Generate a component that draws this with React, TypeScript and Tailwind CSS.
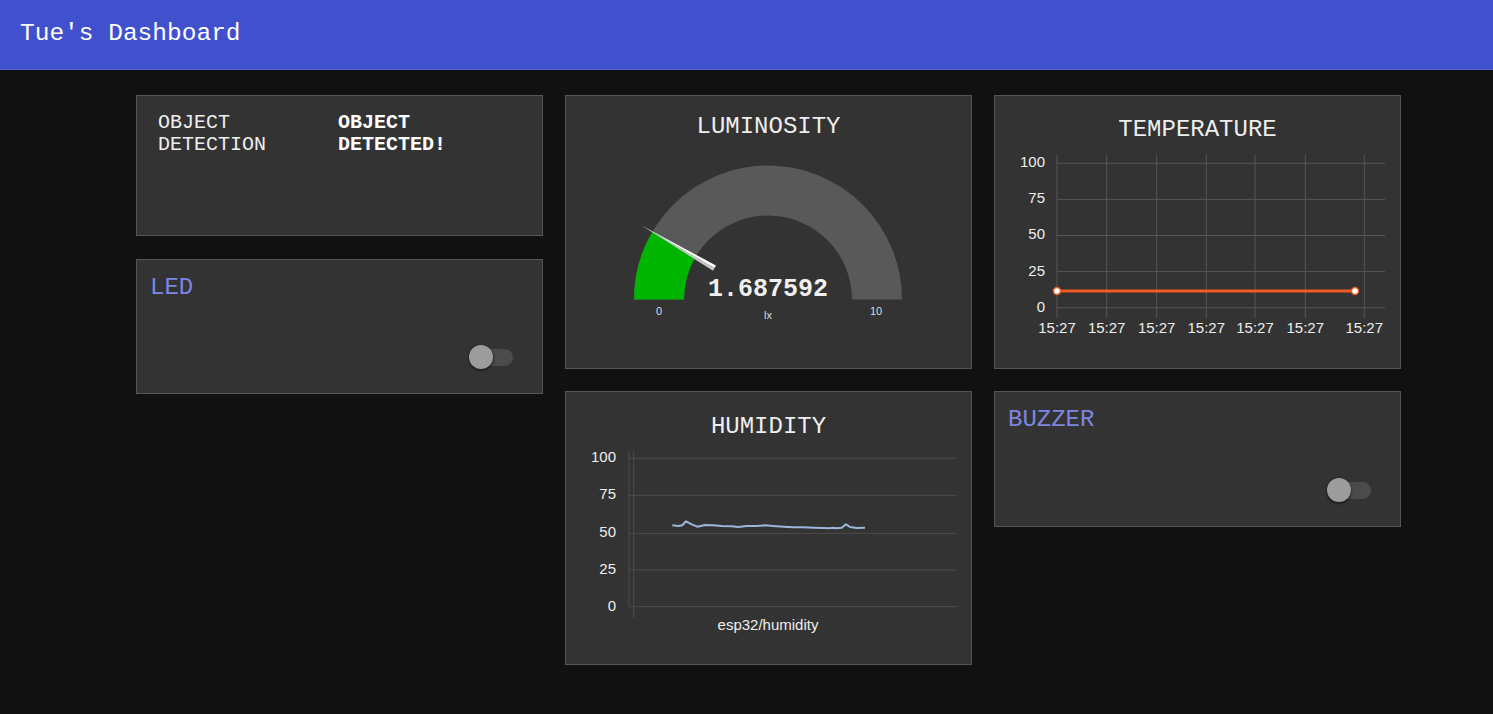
import React from 'react'

const mono = { fontFamily: '"Liberation Mono", "DejaVu Sans Mono", monospace' }
const sans = { fontFamily: '"Liberation Sans", Arial, sans-serif' }

const tempGridY = [20.3, 56.4, 92.5, 128.6, 164.7]
const tempGridX = [62, 111.7, 161.7, 211.3, 260, 310.3, 369.3]
const humGridY = [18.3, 55.3, 93.3, 130, 166.7]
const yLabels = ['100', '75', '50', '25', '0']

const humidity: [number, number][] = [
  [106.3, 85.3], [112.3, 86], [116.3, 85.3], [120, 81.3], [125.7, 84.3], [131.3, 86.7],
  [139, 85], [147.3, 85.3], [155.7, 86], [165.7, 86.3], [172.3, 87], [180.7, 86],
  [190.7, 86], [199, 85.3], [207.3, 86], [217.3, 86.7], [227.3, 87.3], [237.3, 87.3],
  [247.3, 87.7], [257.3, 88], [264, 88.3], [267.3, 87.7], [270.7, 88.3], [275.7, 87.7],
  [280, 84.3], [284, 87], [290.7, 88], [299, 87.7],
]

function Card({ className, children }: { className: string; children?: React.ReactNode }) {
  return <div className={`bg-[#333333] border border-[#555555] ${className}`}>{children}</div>
}

function Toggle() {
  return (
    <div className="relative w-[44px] h-[24px]">
      <div className="absolute right-0 top-[3.5px] w-[38px] h-[17px] rounded-full bg-[#4b4b4b]" />
      <div className="absolute left-0 top-0 w-6 h-6 rounded-full bg-[#9c9c9c] shadow-[0_1px_3px_rgba(0,0,0,0.7)]" />
    </div>
  )
}

function SwitchCard({ label, className }: { label: string; className: string }) {
  return (
    <Card className={`flex flex-col ${className}`}>
      <div className="pl-[13px] pt-[14px] text-[24px] leading-[28px] text-[#7d86e2]" style={mono}>
        {label}
      </div>
      <div className="mt-auto flex justify-end pr-[29px] pb-[24px]">
        <Toggle />
      </div>
    </Card>
  )
}

function Title({ text, pt }: { text: string; pt: string }) {
  return (
    <div className={`${pt} text-center text-[24px] leading-[27px] text-[#eeeeee]`} style={mono}>
      {text}
    </div>
  )
}

function Gauge() {
  return (
    <svg width="405" height="229" className="block">
      <path d="M 68 159.5 A 134 134 0 0 1 336 159.5 L 286 159.5 A 84 84 0 0 0 118 159.5 Z" fill="#595959" />
      <path d="M 68 159.5 A 134 134 0 0 1 86.4 91.75 L 129.53 117.03 A 84 84 0 0 0 118 159.5 Z" fill="#00b500" />
      <polygon points="75.2,85.2 150,125.6 148.5,128.2" fill="#ffffff" />
      <polygon points="75.2,85.2 148.5,128.2 147,130.8" fill="#c8c8c8" />
      <text x="202" y="149" textAnchor="middle" dominantBaseline="middle" fontSize="25" fontWeight="bold" fill="#f0f0f0" style={mono}>
        1.687592
      </text>
      <g fontSize="11" fill="#dddddd" textAnchor="middle" dominantBaseline="middle" style={sans}>
        <text x="93" y="172">0</text>
        <text x="202" y="176">lx</text>
        <text x="310" y="172">10</text>
      </g>
    </svg>
  )
}

function TempChart() {
  return (
    <svg width="405" height="226" className="block">
      {tempGridY.map((y) => (
        <line key={y} x1="62" x2="390" y1={y} y2={y} stroke="#575757" strokeWidth="1" />
      ))}
      {tempGridX.map((x) => (
        <line key={x} x1={x} x2={x} y1="11.7" y2="174.7" stroke="#575757" strokeWidth="1" />
      ))}
      <g fontSize="15" fill="#eeeeee" style={sans}>
        {yLabels.map((l, i) => (
          <text key={l} x="50" y={tempGridY[i]} textAnchor="end" dominantBaseline="middle">
            {l}
          </text>
        ))}
        {tempGridX.map((x) => (
          <text key={x} x={x} y="186" textAnchor="middle" dominantBaseline="middle">
            15:27
          </text>
        ))}
      </g>
      <line x1="62" x2="360" y1="148" y2="148" stroke="#ef5b25" strokeWidth="3" />
      <circle cx="62" cy="148" r="3.5" fill="#ffffff" stroke="#ef5b25" strokeWidth="1.5" />
      <circle cx="360" cy="148" r="3.5" fill="#ffffff" stroke="#ef5b25" strokeWidth="1.5" />
    </svg>
  )
}

function HumidityChart() {
  return (
    <svg width="405" height="226" className="block">
      {humGridY.map((y) => (
        <line key={y} x1="63" x2="390.7" y1={y} y2={y} stroke="#4d4d4d" strokeWidth="1" />
      ))}
      <line x1="63" x2="63" y1="11" y2="166.7" stroke="#4d4d4d" strokeWidth="1" />
      <line x1="67.7" x2="67.7" y1="11" y2="178" stroke="#4d4d4d" strokeWidth="1" />
      <g fontSize="15" fill="#eeeeee" style={sans}>
        {yLabels.map((l, i) => (
          <text key={l} x="50" y={humGridY[i]} textAnchor="end" dominantBaseline="middle">
            {l}
          </text>
        ))}
        <text x="202" y="186" textAnchor="middle" dominantBaseline="middle">
          esp32/humidity
        </text>
      </g>
      <polyline
        points={humidity.map((p) => p.join(',')).join(' ')}
        fill="none"
        stroke="#9cb6dc"
        strokeWidth="2"
        strokeLinejoin="round"
      />
    </svg>
  )
}

export default function App() {
  return (
    <div className="min-h-[714px] bg-[#111111]">
      <header className="h-[70px] bg-[#4150cc] border-b border-[#5361d6] flex items-center pl-[20px] pb-[1px]">
        <h1 className="text-[24.5px] leading-none text-white" style={mono}>
          Tue's Dashboard
        </h1>
      </header>

      <div className="flex gap-[22px] pl-[136px] pt-[25px]">
        <div className="flex flex-col gap-[23px] w-[407px]">
          <Card className="h-[141px]">
            <div className="flex pl-[21px] pt-[16px] text-[20px] leading-[22px] text-[#eeeeee]" style={mono}>
              <div className="w-[180px]">
                OBJECT
                <br />
                DETECTION
              </div>
              <div className="font-bold text-white">
                OBJECT
                <br />
                DETECTED!
              </div>
            </div>
          </Card>
          <SwitchCard label="LED" className="h-[135px]" />
        </div>

        <div className="flex flex-col gap-[22px] w-[407px]">
          <Card className="h-[274px]">
            <Title text="LUMINOSITY" pt="pt-[17px]" />
            <Gauge />
          </Card>
          <Card className="h-[274px]">
            <Title text="HUMIDITY" pt="pt-[21px]" />
            <HumidityChart />
          </Card>
        </div>

        <div className="flex flex-col gap-[22px] w-[407px]">
          <Card className="h-[274px]">
            <Title text="TEMPERATURE" pt="pt-[20px]" />
            <TempChart />
          </Card>
          <SwitchCard label="BUZZER" className="h-[136px]" />
        </div>
      </div>
    </div>
  )
}
